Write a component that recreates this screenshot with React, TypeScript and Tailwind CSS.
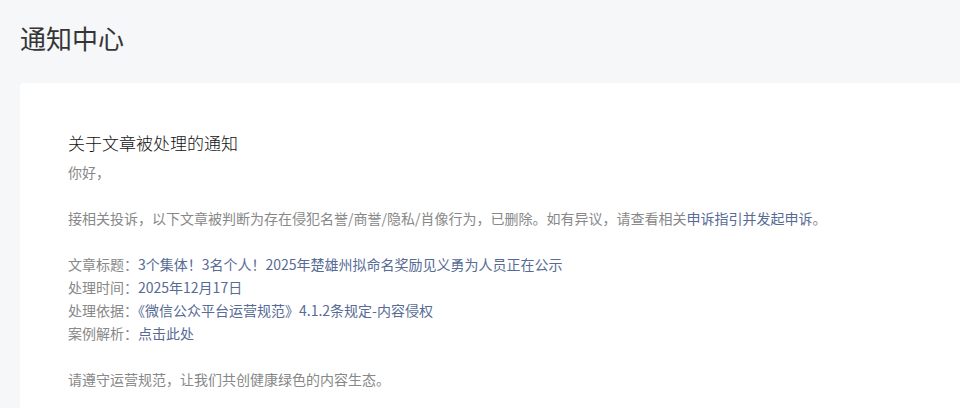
export default function App() {
  const font = "font-['Microsoft_YaHei','Noto_Sans_CJK_SC',sans-serif]";
  const rows = [
    { label: "文章标题：", value: "3个集体！3名个人！2025年楚雄州拟命名奖励见义勇为人员正在公示" },
    { label: "处理时间：", value: "2025年12月17日" },
    { label: "处理依据：", value: "《微信公众平台运营规范》4.1.2条规定-内容侵权" },
    { label: "案例解析：", value: "点击此处" },
  ];

  return (
    <div className={`min-h-screen w-full overflow-hidden bg-[#f6f7f9] pl-5 ${font}`}>
      {/* page title */}
      <h1 className="pt-5 text-[26px] leading-[36px] font-normal text-[#353535]">
        通知中心
      </h1>

      {/* notice card */}
      <div className="mt-[27px] min-h-[400px] rounded-l-[4px] bg-white px-12 pt-12 pb-12">
        <h2 className="mb-[6px] text-[17px] leading-[24px] font-light text-[#111111]">
          关于文章被处理的通知
        </h2>
        <div className="text-[14px] leading-[23px] text-[#888888]">
          <p>你好，</p>
          <p className="mt-[23px]">
            接相关投诉，以下文章被判断为存在侵犯名誉/商誉/隐私/肖像行为，已删除。如有异议，请查看相关
            <span className="text-[#576b95]">申诉指引并发起申诉</span>。
          </p>
          <div className="mt-[23px]">
            {rows.map((r) => (
              <p key={r.label}>
                {r.label}
                <span className="text-[#576b95]">{r.value}</span>
              </p>
            ))}
          </div>
          <p className="mt-[23px]">请遵守运营规范，让我们共创健康绿色的内容生态。</p>
        </div>
      </div>
    </div>
  );
}
